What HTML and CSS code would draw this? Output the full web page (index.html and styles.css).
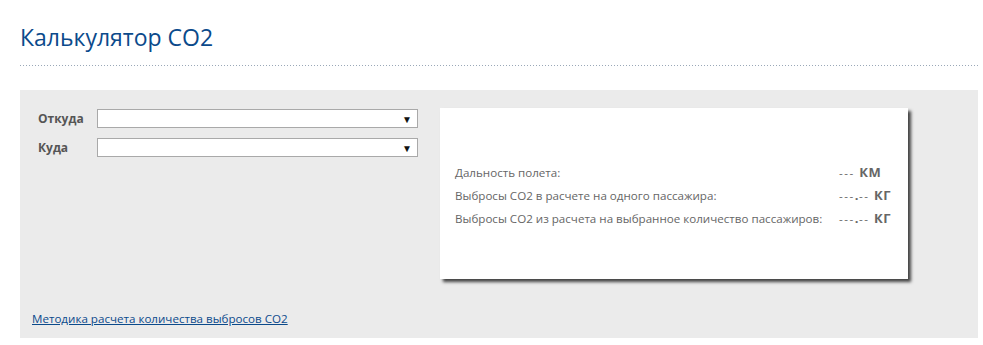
FILE: index.html
```html
<!DOCTYPE html>
<html lang="ru">
<head>
    <meta charset="utf-8">
    <link rel="stylesheet" href="styles.css">
    <title>Калькулятор CO2</title>
</head>
<body>
<h1 class="page-title">Калькулятор CO2</h1>
<div class="calc">
    <div class="calc-top">
        <div class="calc-form">
            <label class="calc-field">
                <span class="calc-label">Откуда</span>
                <span class="calc-select"><span class="calc-arrow">▼</span></span>
            </label>
            <label class="calc-field">
                <span class="calc-label">Куда</span>
                <span class="calc-select"><span class="calc-arrow">▼</span></span>
            </label>
        </div>
        <div class="calc-result">
            <div class="result-row">
                <span class="result-name">Дальность полета:</span>
                <span class="result-value">--- <b>КМ</b></span>
            </div>
            <div class="result-row">
                <span class="result-name">Выбросы CO2 в расчете на одного пассажира:</span>
                <span class="result-value">---<b>.</b>-- <b>КГ</b></span>
            </div>
            <div class="result-row">
                <span class="result-name">Выбросы CO2 из расчета на выбранное количество пассажиров:</span>
                <span class="result-value">---<b>.</b>-- <b>КГ</b></span>
            </div>
        </div>
    </div>
    <a class="calc-link" href="#">Методика расчета количества выбросов CO2</a>
</div>
</body>
</html>
```

FILE: styles.css
```css
body {
  margin: 0;
  padding: 0 5px 0 20px;
  font-family: "Open Sans", "Noto Sans", sans-serif;
  color: #555555;
  background-color: #ffffff;
}

/* заголовок с пунктирной линией снизу */
.page-title {
  margin: 0;
  padding: 22px 0 14px;
  font-size: 23px;
  font-weight: normal;
  line-height: 30px;
  color: #0b4a8b;
  background-image: linear-gradient(to right, #9aa8b8 1px, transparent 1px);
  background-size: 3px 1px;
  background-repeat: repeat-x;
  background-position: left bottom;
}

.calc {
  margin-top: 24px;
  height: 248px;
  box-sizing: border-box;
  padding: 18px 0 11px;
  background-color: #ebebeb;
  display: flex;
  flex-direction: column;
}

.calc-top {
  display: flex;
  padding-left: 18px;
}

.calc-form {
  width: 380px;
  padding-top: 1px;
}

.calc-field {
  display: flex;
  align-items: center;
  margin-bottom: 10px;
}

.calc-label {
  width: 59px;
  font-size: 12px;
  font-weight: bold;
  color: #555555;
}

.calc-select {
  flex: 1;
  height: 19px;
  box-sizing: border-box;
  background-color: #ffffff;
  border: 1px solid #a9a9a9;
  display: flex;
  justify-content: flex-end;
  align-items: center;
  padding-right: 5px;
}

.calc-arrow {
  font-size: 10px;
  line-height: 10px;
  color: #111111;
}

/* блок результатов */
.calc-result {
  margin-left: 22px;
  width: 468px;
  height: 171px;
  box-sizing: border-box;
  padding: 4px 16px 0 15px;
  background-color: #ffffff;
  box-shadow: 3px 3px 3px #444444;
  display: flex;
  flex-direction: column;
  justify-content: center;
}

.result-row {
  display: flex;
  font-size: 11.6px;
  line-height: 23px;
}

.result-name {
  width: 384px;
  color: #666666;
}

.result-value {
  color: #666666;
  letter-spacing: 1.5px;
}

.result-value b {
  font-size: 13px;
  letter-spacing: 0.5px;
}

.calc-link {
  margin-top: auto;
  margin-left: 12px;
  font-size: 11.6px;
  line-height: 16px;
  color: #0b4a8b;
}
```
